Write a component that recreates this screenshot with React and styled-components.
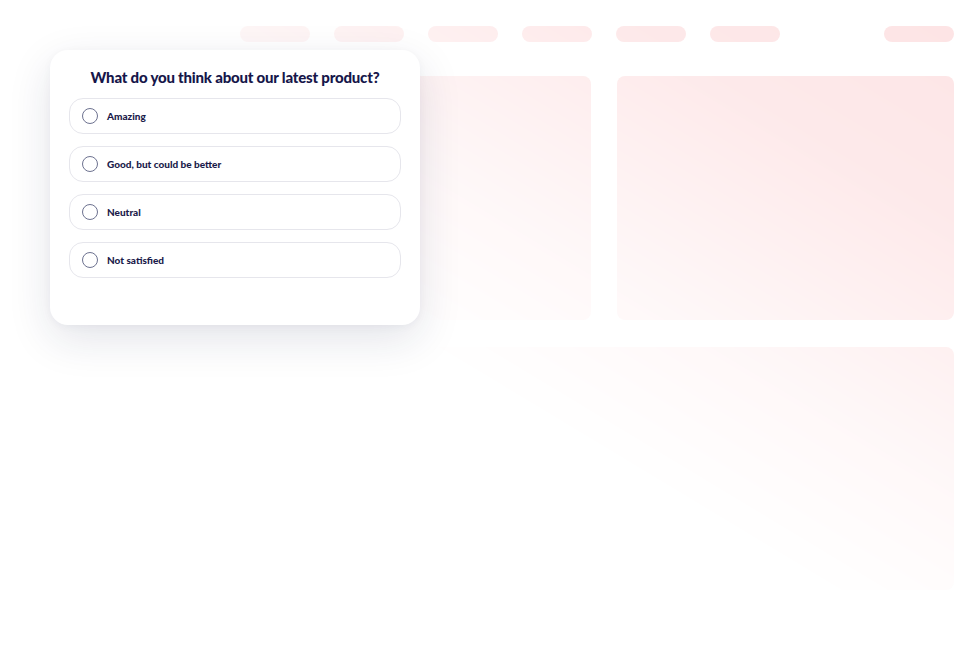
import styled, { createGlobalStyle } from "styled-components";

const GlobalStyle = createGlobalStyle`
  html, body {
    margin: 0;
    padding: 0;
    background: #ffffff;
  }
  * {
    box-sizing: border-box;
  }
`;

const Page = styled.div`
  position: relative;
  width: 978px;
  height: 646px;
  overflow: hidden;
  background: #fff;
  font-family: "Lato", "Liberation Sans", sans-serif;
`;

// faded dashboard mock behind the survey card
const Dashboard = styled.div`
  padding: 26px 24px 0 240px;
  display: flex;
  flex-direction: column;
  mask-image: linear-gradient(
    to top right,
    transparent 42%,
    rgba(0, 0, 0, 0.25) 57%,
    rgba(0, 0, 0, 0.8) 80%,
    #000 100%
  );
`;

const Nav = styled.div`
  display: flex;
  gap: 24px;
`;

const Pill = styled.div`
  width: 70px;
  height: 16px;
  border-radius: 8px;
  background: #fde3e4;
  margin-left: ${(p) => (p.$push ? "auto" : "0")};
`;

const PanelRow = styled.div`
  display: grid;
  grid-template-columns: ${(p) => p.$cols};
  gap: 26px;
  margin-top: ${(p) => p.$top}px;
  height: ${(p) => p.$height}px;
`;

const Panel = styled.div`
  border-radius: 8px;
  background: #fde4e5;
  grid-column: ${(p) => p.$col || "auto"};
`;

const Card = styled.div`
  position: absolute;
  left: 50px;
  top: 50px;
  width: 370px;
  height: 275px;
  background: #fff;
  border-radius: 18px;
  box-shadow: 0 14px 44px rgba(28, 30, 70, 0.12), 0 2px 8px rgba(28, 30, 70, 0.04);
  padding: 18px 19px 0 19px;
  display: flex;
  flex-direction: column;
  align-items: stretch;
`;

const Title = styled.h2`
  margin: 0 0 11px 0;
  text-align: center;
  font-size: 15px;
  font-weight: 900;
  color: #16164a;
  letter-spacing: -0.2px;
  line-height: 19px;
`;

const Options = styled.div`
  display: flex;
  flex-direction: column;
  gap: 12px;
`;

const Option = styled.label`
  display: flex;
  align-items: center;
  gap: 9px;
  height: 36px;
  padding: 0 12px;
  border: 1.5px solid #e6e6ec;
  border-radius: 14px;
  background: #fff;
  cursor: pointer;
`;

const Radio = styled.span`
  width: 16px;
  height: 16px;
  border-radius: 50%;
  border: 1.8px solid #6d7290;
  flex: none;
`;

const Label = styled.span`
  font-size: 10px;
  font-weight: 900;
  color: #1b1b4b;
`;

const answers = ["Amazing", "Good, but could be better", "Neutral", "Not satisfied"];

export default function App() {
  return (
    <Page>
      <GlobalStyle />
      <Dashboard>
        <Nav>
          {[0, 1, 2, 3, 4, 5].map((i) => (
            <Pill key={i} />
          ))}
          <Pill $push />
        </Nav>
        <PanelRow $cols="351fr 337fr" $top={34} $height={244}>
          <Panel />
          <Panel />
        </PanelRow>
        <PanelRow $cols="166px 1fr" $top={27} $height={243}>
          <Panel $col="2" />
        </PanelRow>
      </Dashboard>

      <Card>
        <Title>What do you think about our latest product?</Title>
        <Options>
          {answers.map((a) => (
            <Option key={a}>
              <Radio />
              <Label>{a}</Label>
            </Option>
          ))}
        </Options>
      </Card>
    </Page>
  );
}
